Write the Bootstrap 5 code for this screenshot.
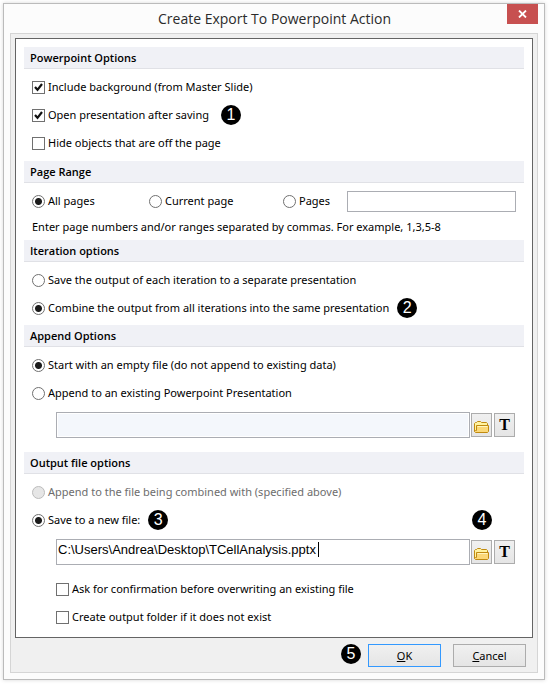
<!DOCTYPE html>
<html lang="en">
<head>
<meta charset="utf-8">
<meta name="viewport" content="width=device-width, initial-scale=1">
<title>Create Export To Powerpoint Action</title>
<link href="https://cdn.jsdelivr.net/npm/bootstrap@5.3.0/dist/css/bootstrap.min.css" rel="stylesheet">
<style>
  body { font: 11px/16px "Noto Sans", "Open Sans", sans-serif; color: #000; background: #fff; }
  .dialog { margin: 3px 5px 5px 3px; padding: 0 6px 6px; border: 1px solid #bbb; background: #fcfcfc; box-shadow: 0 0 4px rgba(0,0,0,.16); }
  .titlebar { height: 29px; padding: 0 0 0 32px; }
  .titlebar h1 { font-family: "Open Sans", sans-serif; font-size: 14px; line-height: 29px; color: #2b2b2b; }
  .close-btn { width: 31px; height: 20px; border: 0; background: #c75050; }
  .client { padding: 4px; border: 1px solid #d5d5d5; background: #f0f0f0; }
  .panel { padding: 8px 8px 6px; border: 1px solid #646464; background: #fff; }
  .section-title { height: 22px; padding: 0 6px; margin: 0; font-family: "Open Sans", sans-serif; font-size: 11px; line-height: 21px; font-weight: 600; -webkit-text-stroke: 0 #000; background: #f0f1f6; border-bottom: 1px solid #e0e1e6; }
  .section-body { padding: 4px 8px; }
  .section-body.snug { padding-bottom: 3px; }
  .option-row { min-height: 28px; }
  .option { display: inline-flex; align-items: center; gap: 3px; }
  .option .form-check-input { width: 13px; height: 13px; margin: 0; flex: none; border: 1px solid #707070; background-color: #fff; box-shadow: none; }
  .option .form-check-input[type=checkbox] { border-radius: 0; }
  .option .form-check-input[type=checkbox]:checked { background: #fff url("data:image/svg+xml,%3Csvg xmlns='http://www.w3.org/2000/svg' viewBox='0 0 11 11'%3E%3Cpath d='M2 5 4.5 7.8 9 2' fill='none' stroke='%23111' stroke-width='2.2'/%3E%3C/svg%3E") center/11px no-repeat; }
  .option .form-check-input[type=radio]:checked { background: #fff radial-gradient(circle, #1c1c1c 3px, transparent 4px); }
  .option .form-check-input:disabled { background: #e6e6e6; border-color: #bcbcbc; opacity: 1; }
  .option .form-check-input:disabled ~ label { color: #6d6d6d; opacity: 1; }
  .range-row { display: grid; grid-template-columns: 117px 134px 64px 1fr; align-items: center; }
  .field { border: 1px solid #abadb3; border-radius: 0; padding: 0 1px; min-height: 0; height: 21px; font: 13px/16px "Liberation Sans", Arial, sans-serif; color: #000; }
  .field:disabled { background: #f4f7fc; box-shadow: inset 0 0 0 1px #fff; }
  .hint { height: 21px; line-height: 24px; }
  .indent { padding-left: 24px; }
  .path-row { padding-top: 5px; padding-right: 1px; }
  .path-row.spaced { margin-bottom: 14px; }
  .path-row .field { height: 26px; padding-bottom: 6px; }
  .caret { left: 262px; top: 3px; width: 1px; height: 15px; background: #000; }
  .tool { flex: none; width: 21px; height: 24px; padding: 0; margin-left: 1px; border: 1px solid #acacac; background: linear-gradient(#f0f0f0, #e5e5e5); }
  .tool svg { display: block; margin: 3px auto 0; }
  .tool + .tool { margin-left: 2px; }
  .tool-text { font: 700 16px/20px "Liberation Serif", serif; }
  .step { width: 20px; height: 20px; border-radius: 50%; background: #000; color: #fff; font: 16px/20px "Liberation Sans", Arial, sans-serif; text-align: center; flex: none; margin-left: 8px; }
  .step.wide { margin-left: 12px; }
  .overwrite { padding-top: 10px; }
  .actions { padding: 6px 7px 0 0; height: 30px; }
  .action { width: 73px; height: 23px; padding: 0; font-size: 11px; line-height: 21px; border: 1px solid #acacac; border-radius: 0; color: #000; background: linear-gradient(#f0f0f0, #e5e5e5); }
  .action.default { border-color: #3399ff; margin: 0 12px 0 7px; }
</style>
</head>
<body>
<main class="dialog">
  <header class="titlebar d-flex align-items-start">
    <h1 class="flex-grow-1 text-center fw-normal m-0">Create Export To Powerpoint Action</h1>
    <button class="close-btn d-flex align-items-center justify-content-center p-0" type="button" aria-label="Close">
      <svg width="9" height="8" viewBox="0 0 9 8"><path d="M1 .5 8 7.5M8 .5 1 7.5" stroke="#fff" stroke-width="1.8"/></svg>
    </button>
  </header>
  <form class="client">
    <div class="panel">
      <section>
        <h2 class="section-title">Powerpoint Options</h2>
        <div class="section-body">
          <div class="option-row d-flex align-items-center"><div class="option"><input class="form-check-input" type="checkbox" id="bg" checked><label for="bg">Include background (from Master Slide)</label></div></div>
          <div class="option-row d-flex align-items-center"><div class="option"><input class="form-check-input" type="checkbox" id="open" checked><label for="open">Open presentation after saving</label></div><span class="step wide">1</span></div>
          <div class="option-row d-flex align-items-center"><div class="option"><input class="form-check-input" type="checkbox" id="hide"><label for="hide">Hide objects that are off the page</label></div></div>
        </div>
      </section>
      <section>
        <h2 class="section-title">Page Range</h2>
        <div class="section-body">
          <div class="option-row range-row">
            <div class="option"><input class="form-check-input" type="radio" name="range" id="all" checked><label for="all">All pages</label></div>
            <div class="option"><input class="form-check-input" type="radio" name="range" id="current"><label for="current">Current page</label></div>
            <div class="option"><input class="form-check-input" type="radio" name="range" id="pages"><label for="pages">Pages</label></div>
            <input class="form-control field" type="text" aria-label="Page numbers">
          </div>
          <div class="hint">Enter page numbers and/or ranges separated by commas. For example, 1,3,5-8</div>
        </div>
      </section>
      <section>
        <h2 class="section-title">Iteration options</h2>
        <div class="section-body snug">
          <div class="option-row d-flex align-items-center"><div class="option"><input class="form-check-input" type="radio" name="iter" id="sep"><label for="sep">Save the output of each iteration to a separate presentation</label></div></div>
          <div class="option-row d-flex align-items-center"><div class="option"><input class="form-check-input" type="radio" name="iter" id="comb" checked><label for="comb">Combine the output from all iterations into the same presentation</label></div><span class="step">2</span></div>
        </div>
      </section>
      <section>
        <h2 class="section-title">Append Options</h2>
        <div class="section-body pb-0">
          <div class="option-row d-flex align-items-center"><div class="option"><input class="form-check-input" type="radio" name="append" id="empty" checked><label for="empty">Start with an empty file (do not append to existing data)</label></div></div>
          <div class="option-row d-flex align-items-center"><div class="option"><input class="form-check-input" type="radio" name="append" id="exist"><label for="exist">Append to an existing Powerpoint Presentation</label></div></div>
          <div class="indent path-row spaced d-flex align-items-center">
            <input class="form-control field" type="text" aria-label="Existing presentation" disabled>
            <button class="tool" type="button" aria-label="Browse"><svg width="15" height="12" viewBox="0 0 15 12"><path d="M.5 10.5v-8l1-1h1l1-1h3l1 1h5l1 1v3" fill="#fff3a0" stroke="#c08a10"/><path d="M2.5 4.5h12v6l-1 1h-12l-1-1 1-1h1z" fill="#fbd878" stroke="#c08a10"/><path d="M3.5 5.5h10" stroke="#fff6c0"/></svg></button>
            <button class="tool tool-text" type="button">T</button>
          </div>
        </div>
      </section>
      <section>
        <h2 class="section-title">Output file options</h2>
        <div class="section-body pb-0">
          <div class="option-row d-flex align-items-center"><div class="option"><input class="form-check-input" type="radio" name="out" id="same" disabled><label for="same">Append to the file being combined with (specified above)</label></div></div>
          <div class="option-row d-flex align-items-center"><div class="option"><input class="form-check-input" type="radio" name="out" id="newf" checked><label for="newf">Save to a new file:</label></div><span class="step">3</span><span class="step ms-auto me-4">4</span></div>
          <div class="indent path-row d-flex align-items-center">
            <div class="position-relative flex-grow-1"><input class="form-control field" type="text" aria-label="Output file" value="C:\Users\Andrea\Desktop\TCellAnalysis.pptx"><span class="caret position-absolute"></span></div>
            <button class="tool" type="button" aria-label="Browse"><svg width="15" height="12" viewBox="0 0 15 12"><path d="M.5 10.5v-8l1-1h1l1-1h3l1 1h5l1 1v3" fill="#fff3a0" stroke="#c08a10"/><path d="M2.5 4.5h12v6l-1 1h-12l-1-1 1-1h1z" fill="#fbd878" stroke="#c08a10"/><path d="M3.5 5.5h10" stroke="#fff6c0"/></svg></button>
            <button class="tool tool-text" type="button">T</button>
          </div>
          <div class="indent overwrite">
            <div class="option-row d-flex align-items-center"><div class="option"><input class="form-check-input" type="checkbox" id="ask"><label for="ask">Ask for confirmation before overwriting an existing file</label></div></div>
            <div class="option-row d-flex align-items-center"><div class="option"><input class="form-check-input" type="checkbox" id="folder"><label for="folder">Create output folder if it does not exist</label></div></div>
          </div>
        </div>
      </section>
    </div>
    <div class="actions d-flex justify-content-end">
      <span class="step">5</span>
      <button class="btn action default" type="button"><u>O</u>K</button>
      <button class="btn action" type="button"><u>C</u>ancel</button>
    </div>
  </form>
</main>
<script src="https://cdn.jsdelivr.net/npm/bootstrap@5.3.0/dist/js/bootstrap.bundle.min.js"></script>
</body>
</html>
